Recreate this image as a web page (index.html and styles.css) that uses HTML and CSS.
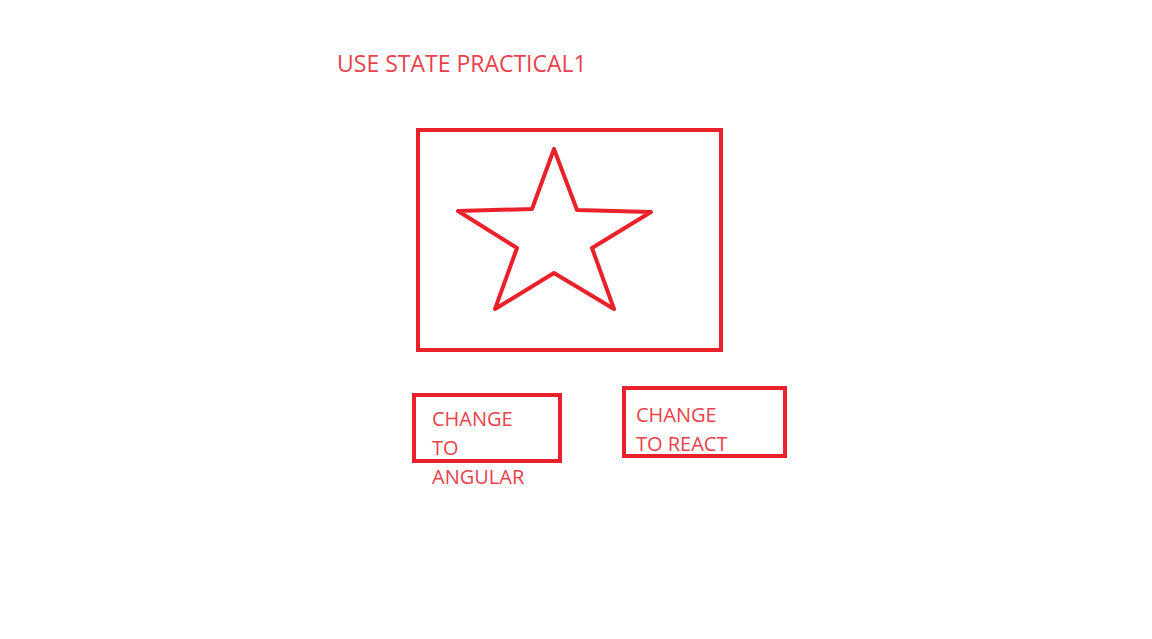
FILE: index.html
```html
<html>
<head>
	<title>use state practical1</title>
	<link rel="stylesheet" href="styles.css">
</head>

<body>

<div id='app'>
	<h1 class='title'>USE STATE PRACTICAL1</h1>

	<div class='card'>
		<svg class='star' viewBox="0 0 299 216" width="299" height="216">
			<polygon points="134,17 157,78 231,80 172,116 194,177 134,141 75,177 97,116 38,79 112,77"
				fill="none" stroke="#e8212a" stroke-width="4" stroke-linejoin="round"/>
		</svg>
	</div>

	<div class='btns'>
		<div class='btn btn-angular'>CHANGE TO ANGULAR</div>
		<div class='btn btn-react'>CHANGE TO REACT</div>
	</div>
</div>

</body>
</html>
```

FILE: styles.css
```css
body{
	margin:0;
	background-color:#fff;
	font-family:"Open Sans","Liberation Sans",sans-serif;
	color:#e8424d;
}
#app{
	display:flex;
	flex-direction:column;
	align-items:flex-start;
	padding:50px 0 0 337px;
}
.title{
	margin:0;
	font-size:23px;
	font-weight:normal;
	line-height:27px;
}
.card{
	display:flex;
	margin:51px 0 0 79px;
	border:4px solid #e8212a;
}
.star{
	display:block;
}
.btns{
	display:flex;
	align-items:flex-start;
	gap:60px;
	margin:34px 0 0 75px;
}
.btn{
	box-sizing:border-box;
	border:4px solid #e8212a;
	font-size:20px;
	line-height:29px;
	cursor:pointer;
}
.btn-angular{
	width:150px;
	height:70px;
	margin-top:7px;
	padding:7px 30px 0 16px;
}
.btn-react{
	width:165px;
	height:72px;
	padding:10px 40px 0 10px;
}
```
